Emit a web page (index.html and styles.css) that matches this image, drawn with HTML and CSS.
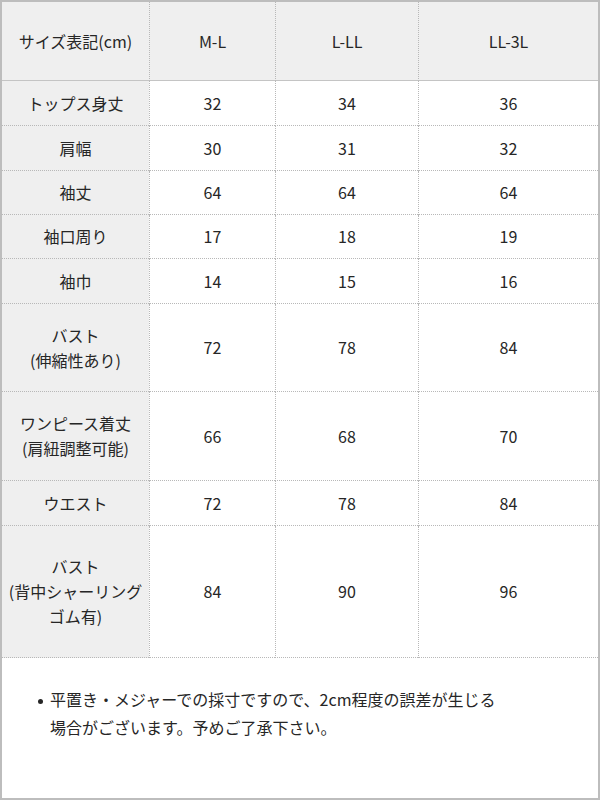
FILE: index.html
```
<!DOCTYPE html>
<html lang="ja">
<head>
<meta charset="utf-8">
<link rel="stylesheet" href="styles.css">
</head>
<body>
<div class="frame">
  <table class="size-table">
    <colgroup>
      <col class="c1"><col class="c2"><col class="c3"><col class="c4">
    </colgroup>
    <thead>
      <tr class="h79">
        <th class="label">サイズ表記(cm)</th><th>M-L</th><th>L-LL</th><th>LL-3L</th>
      </tr>
    </thead>
    <tbody>
      <tr class="h45"><th class="label">トップス身丈</th><td>32</td><td>34</td><td>36</td></tr>
      <tr class="h45"><th class="label">肩幅</th><td>30</td><td>31</td><td>32</td></tr>
      <tr class="h44"><th class="label">袖丈</th><td>64</td><td>64</td><td>64</td></tr>
      <tr class="h44"><th class="label">袖口周り</th><td>17</td><td>18</td><td>19</td></tr>
      <tr class="h45"><th class="label">袖巾</th><td>14</td><td>15</td><td>16</td></tr>
      <tr class="h88"><th class="label">バスト<br>(伸縮性あり)</th><td>72</td><td>78</td><td>84</td></tr>
      <tr class="h89"><th class="label">ワンピース着丈<br>(肩紐調整可能)</th><td>66</td><td>68</td><td>70</td></tr>
      <tr class="h45"><th class="label">ウエスト</th><td>72</td><td>78</td><td>84</td></tr>
      <tr class="h132"><th class="label">バスト<br>(背中シャーリング<br>ゴム有)</th><td>84</td><td>90</td><td>96</td></tr>
    </tbody>
  </table>
  <div class="notes">
    <ul class="note-list">
      <li class="note-item"><span class="note-text">平置き・メジャーでの採寸ですので、2cm程度の誤差が生じる場合がございます。予めご了承下さい。</span></li>
    </ul>
  </div>
</div>
</body>
</html>
```
FILE: styles.css
```
html, body {
  margin: 0;
  padding: 0;
  background: #fff;
}
body {
  font-family: "Noto Sans CJK JP", "Noto Sans", sans-serif;
  font-size: 16px;
  color: #262626;
}
.frame {
  width: 600px;
  height: 800px;
  box-sizing: border-box;
  border: 2px solid #bdbdbd;
  background: #fff;
}
.size-table {
  width: 596px;
  table-layout: fixed;
  border-collapse: separate;
  border-spacing: 0;
}
.c1 { width: 147px; }
.c2 { width: 126px; }
.c3 { width: 143px; }
.c4 { width: 180px; }
.size-table th,
.size-table td {
  padding: 0;
  text-align: center;
  vertical-align: middle;
  font-weight: normal;
  line-height: 25px;
  border-bottom: 1px dotted #b8b8b8;
  box-sizing: border-box;
}
.size-table th + th,
.size-table td {
  border-left: 1px dotted #b8b8b8;
}
.size-table thead th {
  background: #efefef;
  border-bottom: 1px solid #c4c4c4;
}
.label {
  background: #efefef;
}
.h79 { height: 79px; }
.h45 { height: 45px; }
.h44 { height: 44px; }
.h88 { height: 88px; }
.h89 { height: 89px; }
.h132 { height: 132px; }
.notes {
  padding-top: 27px;
}
.note-list {
  margin: 0;
  padding-left: 36px;
  list-style: none;
  line-height: 28px;
}
.note-item {
  display: flex;
  align-items: flex-start;
}
.note-item::before {
  content: "";
  flex-shrink: 0;
  width: 5px;
  height: 5px;
  border-radius: 50%;
  background: #262626;
  margin-top: 14px;
  margin-right: 7px;
}
.note-text {
  width: 455px;
}
```
